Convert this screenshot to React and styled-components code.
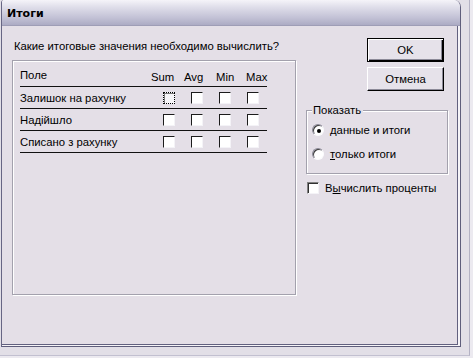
import React from 'react'
import styled, { createGlobalStyle } from 'styled-components'

const Global = createGlobalStyle`
  html, body {
    margin: 0;
    padding: 0;
    background: #eceaf0;
  }
  body {
    font-family: "Liberation Sans", Arial, sans-serif;
    font-size: 11.3px;
    color: #000;
  }
`

const Screen = styled.div`
  width: 473px;
  height: 358px;
  overflow: hidden;
  background: #eceaf0;
`

const Behind = styled.div`
  width: 470px;
  height: 356px;
  background: #e2dfe7;
  border-right: 1px solid #b4b2c4;
  border-bottom: 1px solid #c2c0d0;
  padding-left: 1px;
  box-sizing: border-box;
`

const Window = styled.div`
  width: 460px;
  height: 347px;
  box-sizing: border-box;
  display: flex;
  flex-direction: column;
  background: #f6f4f8;
  border-left: 1px solid #676684;
  border-right: 1px solid #5f5e7c;
  border-bottom: 1px solid #5f5e7c;
  border-top-right-radius: 7px;
  border-top-left-radius: 3px;
  overflow: hidden;
`

const TitleBar = styled.div`
  height: 26px;
  flex: none;
  display: flex;
  align-items: center;
  padding-left: 5px;
  background: linear-gradient(#f5f4f9 0%, #dedde9 30%, #c3c2d6 70%, #acabc4 100%);
  border-bottom: 1px solid #9e9db6;
  box-sizing: border-box;
`

const Title = styled.span`
  font-family: "DejaVu Sans", sans-serif;
  font-weight: bold;
  font-size: 11px;
  padding-top: 2px;
`

const Frame = styled.div`
  flex: 1;
  padding: 0 2px 1px 0;
  display: flex;
`

const Body = styled.div`
  flex: 1;
  display: flex;
  gap: 10px;
  padding: 12px 0 0 10px;
  background: #e4dfe7;
  border-right: 1px solid #62617f;
  border-bottom: 1px solid #62617f;
`

const LeftColumn = styled.div`
  width: 284px;
  display: flex;
  flex-direction: column;
`

const Question = styled.div`
  line-height: 14px;
  margin: 1px 0 0 2px;
`

const Panel = styled.div`
  margin-top: 7px;
  height: 235px;
  box-sizing: border-box;
  border: 1px solid #a3a1ad;
  box-shadow: inset 1px 1px 0 #fff, 1px 1px 0 #fff;
  padding: 4px 28px 0 7px;
`

const Row = styled.div`
  display: grid;
  grid-template-columns: 1fr repeat(4, 28px);
  height: 21px;
  border-bottom: 1px solid #111;
  align-items: center;
`

const HeaderRow = styled(Row)`
  align-items: end;
`

const FieldHead = styled.span`
  align-self: start;
  margin-top: 4px;
`

const ColHead = styled.span`
  justify-self: start;
  margin-left: ${p => p.$offset}px;
  padding-bottom: 3px;
`

const Box = styled.span`
  justify-self: center;
  width: 12px;
  height: 12px;
  box-sizing: border-box;
  background: #fff;
  border-top: 1px solid ${p => (p.$light ? '#808080' : '#1c1c1c')};
  border-left: 1px solid ${p => (p.$light ? '#808080' : '#1c1c1c')};
  border-right: 1px solid #f4f3f7;
  border-bottom: 1px solid #f4f3f7;
  box-shadow: ${p => (p.$light ? 'inset 1px 1px 0 #303030' : 'none')};
`

const FocusBox = styled(Box)`
  border: 1px dotted #000;
  background: #f6f5f8;
  box-shadow: inset 1px 1px 0 #777;
`

const RightColumn = styled.div`
  width: 142px;
  display: flex;
  flex-direction: column;
`

const Button = styled.button`
  align-self: flex-end;
  margin-right: 4px;
  width: 77px;
  height: 24px;
  padding: 0;
  font: inherit;
  color: #000;
  background: #e6e2ea;
  box-sizing: border-box;
  border: 1px solid;
  border-color: ${p => (p.$default ? '#000' : '#fff #000 #000 #fff')};
  box-shadow: ${p =>
    p.$default
      ? 'inset 1px 1px 0 #fff, inset -1px -1px 0 #000, inset -2px -2px 0 #8c8a98'
      : 'inset -1px -1px 0 #8c8a98'};
  & + & {
    margin-top: 5px;
  }
`

const Group = styled.fieldset`
  margin: 13px 0 0 0;
  padding: 1px 6px 7px 5px;
  border: 1px solid #a3a1ad;
  box-shadow: inset 1px 1px 0 #fff, 1px 1px 0 #fff;
`

const Legend = styled.legend`
  padding: 0 2px 0 1px;
  line-height: 13px;
  background: #e4dfe7;
`

const Option = styled.label`
  height: 24px;
  display: flex;
  align-items: center;
  gap: 6px;
`

const Radio = styled.span`
  width: 12px;
  height: 12px;
  box-sizing: border-box;
  border-radius: 50%;
  background: #fff;
  border: 1px solid;
  border-color: #8a8896 #fbfbfd #fbfbfd #8a8896;
  box-shadow: inset 1px 1px 0 #3c3c3c;
  display: flex;
  align-items: center;
  justify-content: center;
  &::after {
    content: '';
    width: 4px;
    height: 4px;
    border-radius: 50%;
    background: ${p => (p.$on ? '#000' : 'transparent')};
    margin: 1px 0 0 1px;
  }
`

const CheckLine = styled.label`
  margin-top: 7px;
  margin-left: 1px;
  height: 14px;
  display: flex;
  align-items: center;
  gap: 6px;
`

const Key = styled.u`
  text-decoration-thickness: 1px;
  text-underline-offset: 1px;
`

const fields = ['Залишок на рахунку', 'Надійшло', 'Списано з рахунку']
const heads = [
  ['Sum', -4],
  ['Avg', 1],
  ['Min', 5],
  ['Max', 7],
]

export default function App() {
  return (
    <Screen>
      <Global />
      <Behind>
        <Window>
          <TitleBar>
            <Title>Итоги</Title>
          </TitleBar>
          <Frame>
            <Body>
              <LeftColumn>
                <Question>Какие итоговые значения необходимо вычислить?</Question>
                <Panel>
                  <HeaderRow>
                    <FieldHead>Поле</FieldHead>
                    {heads.map(([h, o]) => (
                      <ColHead key={h} $offset={o}>
                        {h}
                      </ColHead>
                    ))}
                  </HeaderRow>
                  {fields.map((f, i) => (
                    <Row key={f}>
                      <span>{f}</span>
                      {[0, 1, 2, 3].map(c =>
                        i === 0 && c === 0 ? <FocusBox key={c} /> : <Box key={c} />
                      )}
                    </Row>
                  ))}
                </Panel>
              </LeftColumn>
              <RightColumn>
                <Button $default>OK</Button>
                <Button>Отмена</Button>
                <Group>
                  <Legend>Показать</Legend>
                  <Option>
                    <Radio $on />
                    <span>
                      <Key>д</Key>анные и итоги
                    </span>
                  </Option>
                  <Option>
                    <Radio />
                    <span>
                      <Key>т</Key>олько итоги
                    </span>
                  </Option>
                </Group>
                <CheckLine>
                  <Box $light />
                  <span>
                    В<Key>ы</Key>числить проценты
                  </span>
                </CheckLine>
              </RightColumn>
            </Body>
          </Frame>
        </Window>
      </Behind>
    </Screen>
  )
}
